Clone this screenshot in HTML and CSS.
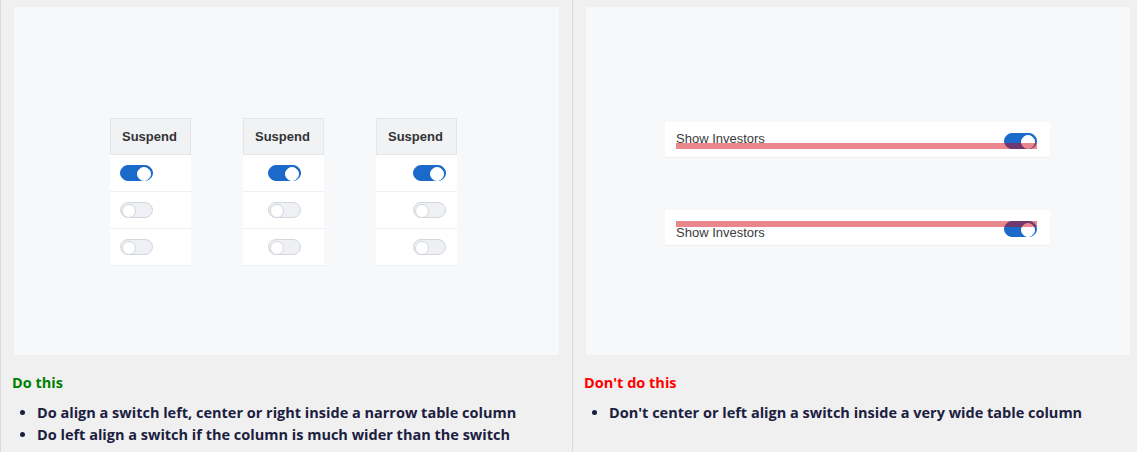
FILE: index.html
```html
<!DOCTYPE html>
<html lang="en">
<head>
<meta charset="utf-8">
<title>Switch alignment</title>
<link rel="stylesheet" href="styles.css">
</head>
<body>
<div class="page">
  <section class="col col-do">
    <div class="frame frame-tables">
      <div class="tables">
        <div class="tbl align-left">
          <div class="th">Suspend</div>
          <div class="td"><span class="sw on"></span></div>
          <div class="td"><span class="sw"></span></div>
          <div class="td"><span class="sw"></span></div>
        </div>
        <div class="tbl align-center">
          <div class="th">Suspend</div>
          <div class="td"><span class="sw on"></span></div>
          <div class="td"><span class="sw"></span></div>
          <div class="td"><span class="sw"></span></div>
        </div>
        <div class="tbl align-right">
          <div class="th">Suspend</div>
          <div class="td"><span class="sw on"></span></div>
          <div class="td"><span class="sw"></span></div>
          <div class="td"><span class="sw"></span></div>
        </div>
      </div>
    </div>
    <h3 class="title title-do">Do this</h3>
    <ul class="points">
      <li>Do align a switch left, center or right inside a narrow table column</li>
      <li>Do left align a switch if the column is much wider than the switch</li>
    </ul>
  </section>
  <section class="col col-dont">
    <div class="frame frame-rows">
      <div class="wide-row row-bottom">
        <span class="label">Show Investors</span>
        <span class="sw on"></span>
        <span class="bar"></span>
      </div>
      <div class="wide-row row-top">
        <span class="label">Show Investors</span>
        <span class="sw on"></span>
        <span class="bar"></span>
      </div>
    </div>
    <h3 class="title title-dont">Don't do this</h3>
    <ul class="points">
      <li>Don't center or left align a switch inside a very wide table column</li>
    </ul>
  </section>
</div>
</body>
</html>
```

FILE: styles.css
```css
* { box-sizing: border-box; }
html, body { margin: 0; padding: 0; }
body {
  background: #f0f0f0;
  width: 1137px;
  height: 452px;
  overflow: hidden;
  font-family: "Liberation Sans", Arial, sans-serif;
}
.page {
  display: grid;
  grid-template-columns: 572px 565px;
  height: 452px;
}
.col {
  border-left: 1px solid #d9d9d9;
  padding: 7px 13px 0 11px;
}
.col-dont { padding: 7px 7px 0 12px; }
.frame {
  margin-left: 2px;
  height: 348px;
  background: #f7f8fa;
}
.col-dont .frame { margin-left: 1px; }
.frame-tables { padding-top: 111px; }
.tables {
  display: flex;
  justify-content: center;
  gap: 52px;
  padding-right: 6px;
}
.tbl {
  width: 81px;
  display: flex;
  flex-direction: column;
}
.th {
  height: 37px;
  background: #f1f2f4;
  border: 1px solid #e3e5e8;
  display: flex;
  align-items: center;
  padding-left: 11px;
  font-weight: bold;
  font-size: 13px;
  color: #333;
}
.td {
  height: 37px;
  background: #fff;
  border-bottom: 1px solid #edeff2;
  display: flex;
  align-items: center;
  padding: 0 11px 0 10px;
}
.align-center .td { justify-content: center; padding: 0 0 0 1px; }
.align-right .td { justify-content: flex-end; }
.sw {
  position: relative;
  flex: none;
  width: 33px;
  height: 16px;
  border-radius: 8px;
  background: #eef0f3;
  border: 1px solid #d3d7dd;
}
.sw::after {
  content: "";
  position: absolute;
  top: 1px;
  left: 1px;
  width: 12px;
  height: 12px;
  border-radius: 50%;
  background: #fff;
  border: 1px solid #d3d7dd;
}
.sw.on {
  background: #1b6ac9;
  border-color: #1b6ac9;
}
.sw.on::after {
  left: auto;
  right: 1px;
  border-color: #fff;
}
.frame-rows {
  padding: 115px 0 0 79px;
  display: flex;
  flex-direction: column;
  gap: 52px;
}
.wide-row {
  position: relative;
  width: 385px;
  height: 36px;
  background: #fff;
  border-bottom: 1px solid #eceef1;
  display: flex;
  justify-content: space-between;
  padding: 0 13px 0 11px;
}
.row-bottom { align-items: flex-end; padding-bottom: 8px; }
.row-top { align-items: flex-start; padding-top: 11px; }
.label {
  font-size: 13px;
  line-height: 16px;
  color: #3a3a3a;
}
.row-bottom .label { margin-bottom: 2px; }
.row-top .label { margin-top: 4px; }
.bar {
  position: absolute;
  left: 11px;
  right: 13px;
  height: 6px;
  background: rgba(208, 0, 10, 0.47);
}
.row-bottom .bar { top: 21px; }
.row-top .bar { top: 11px; }
.title {
  margin: 18px 0 0 0;
  font-family: "Open Sans", Lato, sans-serif;
  font-size: 14.5px;
  line-height: 19px;
  font-weight: bold;
}
.title-do { color: #008000; }
.title-dont { color: #ff0000; margin-left: -1px; }
.points {
  margin: 10px 0 0 0;
  padding-left: 25px;
  font-family: "Open Sans", Lato, sans-serif;
  font-weight: bold;
  font-size: 14.5px;
  line-height: 22px;
  color: #1b2040;
}
.col-dont .points { padding-left: 24px; }
```
